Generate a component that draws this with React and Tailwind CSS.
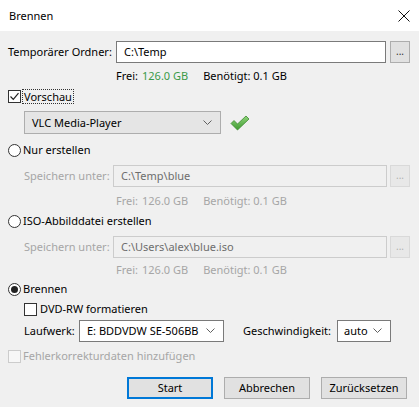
import { useState } from 'react'

const font = { fontFamily: '"Noto Sans", "Liberation Sans", sans-serif' }

function Chevron({ color = '#606060' }) {
  return (
    <svg width="9" height="6" viewBox="0 0 9 6" className="shrink-0">
      <path d="M0.5 0.5 L4.5 4.5 L8.5 0.5" fill="none" stroke={color} strokeWidth="1" />
    </svg>
  )
}

function CheckBox({ checked, disabled }) {
  return (
    <span
      className={
        'flex h-[13px] w-[13px] shrink-0 items-center justify-center border ' +
        (disabled ? 'border-[#cccccc] bg-[#f7f7f7]' : 'border-[#333333] bg-white')
      }
    >
      {checked && (
        <svg width="11" height="11" viewBox="0 0 11 11">
          <path d="M1.5 5.5 L4.3 8.3 L9.5 2.2" fill="none" stroke="#222" strokeWidth="1.2" />
        </svg>
      )}
    </span>
  )
}

function Radio({ checked }) {
  return (
    <span className="flex h-[13px] w-[13px] shrink-0 items-center justify-center rounded-full border border-[#333333] bg-white">
      {checked && <span className="h-[7px] w-[7px] rounded-full bg-[#222222]" />}
    </span>
  )
}

function Browse({ disabled }) {
  return (
    <div
      className={
        'flex h-[22px] w-[20px] shrink-0 items-center justify-center border text-[10px] leading-none ' +
        (disabled ? 'border-[#d9d9d9] bg-[#e8e8e8] text-[#b0b0b0]' : 'border-[#adadad] bg-[#e1e1e1] text-[#333]')
      }
    >
      <span className="-mt-[2px]">...</span>
    </div>
  )
}

function SizeInfo({ disabled }) {
  return (
    <div className={'flex h-[14px] items-center whitespace-nowrap pl-[108px] ' + (disabled ? 'text-[#a6a6a6]' : 'text-black')}>
      <span>Frei:</span>
      <span className={'ml-[4px] ' + (disabled ? '' : 'text-[#3a9a48]')}>126.0 GB</span>
      <span className="ml-[15px]">Benötigt: 0.1 GB</span>
    </div>
  )
}

function SaveRow({ value }) {
  return (
    <div className="flex h-[22px] items-center whitespace-nowrap">
      <span className="w-[105px] shrink-0 pl-[16px] text-[#a6a6a6]">Speichern unter:</span>
      <div className="flex h-[22px] flex-1 items-center border border-[#cccccc] bg-[#f0f0f0] pl-[7px] text-[#6d6d6d]">
        {value}
      </div>
      <div className="ml-[3px]">
        <Browse disabled />
      </div>
    </div>
  )
}

function Button({ label, primary }) {
  return (
    <div
      className={
        'flex h-[22px] w-[86px] items-center justify-center bg-[#e1e1e1] ' +
        (primary ? 'border-2 border-[#0078d7]' : 'border border-[#adadad]')
      }
    >
      {label}
    </div>
  )
}

export default function App() {
  const [mode] = useState('burn')

  return (
    <div className="flex h-[407px] w-[419px] flex-col whitespace-nowrap bg-[#f0f0f0] text-[11px] leading-[14px] text-black" style={font}>
      {/* title bar */}
      <div className="flex h-[31px] shrink-0 items-center justify-between bg-white pl-[9px] pr-[9px]">
        <span className="text-[11px]">Brennen</span>
        <svg width="12" height="12" viewBox="0 0 12 12">
          <path d="M0.5 0.5 L11.5 11.5 M11.5 0.5 L0.5 11.5" stroke="#111" strokeWidth="1" />
        </svg>
      </div>

      <div className="flex flex-col pl-[8px] pr-[9px]">
        {/* temp folder */}
        <div className="mt-[10px] flex h-[22px] items-center">
          <span className="w-[108px] shrink-0">Temporärer Ordner:</span>
          <div className="flex h-[22px] flex-1 items-center border border-[#7a7a7a] bg-white pl-[7px]">C:\Temp</div>
          <div className="ml-[4px]">
            <Browse />
          </div>
        </div>
        <div className="mt-[6px]">
          <SizeInfo />
        </div>

        {/* preview */}
        <div className="mt-[6px] flex h-[14px] items-center">
          <CheckBox checked />
          <span className="ml-[1px] border border-dotted border-[#333] px-[1px] leading-[13px]">Vorschau</span>
        </div>
        <div className="mt-[8px] flex items-center pl-[16px]">
          <div className="flex h-[23px] w-[197px] items-center justify-between border border-[#adadad] bg-[#e5e5e5] pl-[7px] pr-[8px]">
            <span>VLC Media-Player</span>
            <Chevron />
          </div>
          <svg width="20" height="16" viewBox="0 0 20 16" className="ml-[9px]">
            <defs>
              <linearGradient id="g" x1="0" y1="0" x2="0" y2="1">
                <stop offset="0" stopColor="#8fd47a" />
                <stop offset="1" stopColor="#3e9a2f" />
              </linearGradient>
            </defs>
            <path d="M1 8.5 L4 5.5 L7.5 9 L16 1 L19 4 L7.5 15 Z" fill="url(#g)" stroke="#3c8a30" strokeWidth="0.8" strokeLinejoin="round" />
          </svg>
        </div>

        {/* create only */}
        <div className="mt-[9px] flex h-[14px] items-center">
          <Radio checked={mode === 'create'} />
          <span className="ml-[2px]">Nur erstellen</span>
        </div>
        <div className="mt-[8px]">
          <SaveRow value="C:\Temp\blue" />
        </div>
        <div className="mt-[7px]">
          <SizeInfo disabled />
        </div>

        {/* iso */}
        <div className="mt-[6px] flex h-[14px] items-center">
          <Radio checked={mode === 'iso'} />
          <span className="ml-[2px]">ISO-Abbilddatei erstellen</span>
        </div>
        <div className="mt-[8px]">
          <SaveRow value="C:\Users\alex\blue.iso" />
        </div>
        <div className="mt-[5px]">
          <SizeInfo disabled />
        </div>

        {/* burn */}
        <div className="mt-[5px] flex h-[14px] items-center">
          <Radio checked={mode === 'burn'} />
          <span className="ml-[2px]">Brennen</span>
        </div>
        <div className="mt-[6px] flex h-[14px] items-center pl-[16px]">
          <CheckBox />
          <span className="ml-[3px]">DVD-RW formatieren</span>
        </div>
        <div className="mt-[4px] flex h-[22px] items-center pl-[16px]">
          <span className="w-[55px] shrink-0">Laufwerk:</span>
          <div className="flex h-[22px] w-[145px] shrink-0 items-center justify-between border border-[#7a7a7a] bg-white pl-[7px] pr-[8px]">
            <span>E: BDDVDW SE-506BB</span>
            <Chevron />
          </div>
          <span className="ml-[19px] w-[94px] shrink-0">Geschwindigkeit:</span>
          <div className="flex h-[22px] w-[54px] shrink-0 items-center justify-between border border-[#7a7a7a] bg-white pl-[6px] pr-[8px]">
            <span>auto</span>
            <Chevron />
          </div>
        </div>
        <div className="mt-[7px] flex h-[14px] items-center">
          <CheckBox disabled />
          <span className="ml-[2px] text-[#a6a6a6]">Fehlerkorrekturdaten hinzufügen</span>
        </div>

        {/* buttons */}
        <div className="mt-[14px] flex items-center justify-end gap-[11px] pr-[3px]">
          <Button label="Start" primary />
          <Button label="Abbrechen" />
          <Button label="Zurücksetzen" />
        </div>
      </div>
    </div>
  )
}
